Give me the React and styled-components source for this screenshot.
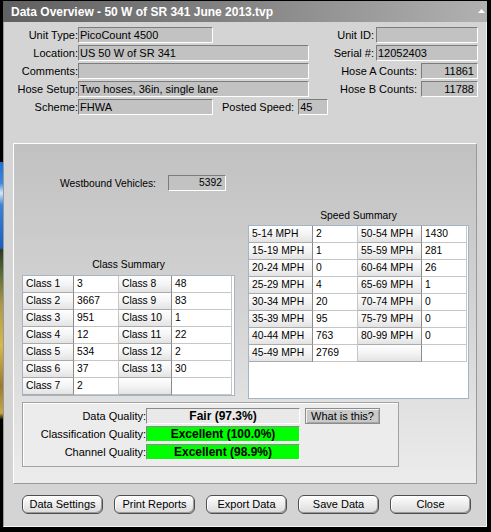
import React from "react"
import styled, { createGlobalStyle } from "styled-components"

const GlobalStyle = createGlobalStyle`
  html, body { margin: 0; padding: 0; background: #000; }
  body { font-family: "Liberation Sans", Arial, sans-serif; color: #000; }
  * { box-sizing: border-box; }
`

const classRows = [
    ["Class 1", "3", "Class 8", "48"],
    ["Class 2", "3667", "Class 9", "83"],
    ["Class 3", "951", "Class 10", "1"],
    ["Class 4", "12", "Class 11", "22"],
    ["Class 5", "534", "Class 12", "2"],
    ["Class 6", "37", "Class 13", "30"],
    ["Class 7", "2", "", ""],
]

const speedRows = [
    ["5-14 MPH", "2", "50-54 MPH", "1430"],
    ["15-19 MPH", "1", "55-59 MPH", "281"],
    ["20-24 MPH", "0", "60-64 MPH", "26"],
    ["25-29 MPH", "4", "65-69 MPH", "1"],
    ["30-34 MPH", "20", "70-74 MPH", "0"],
    ["35-39 MPH", "95", "75-79 MPH", "0"],
    ["40-44 MPH", "763", "80-99 MPH", "0"],
    ["45-49 MPH", "2769", "", ""],
]

const SummaryTable = ({ rows, cols, height }) => (
    <Table cols={cols} style={{ height }}>
        {rows.map((r, i) => (
            <React.Fragment key={i}>
                <LabelCell>{r[0]}</LabelCell>
                <ValueCell>{r[1]}</ValueCell>
                <LabelCell>{r[2]}</LabelCell>
                <ValueCell>{r[3]}</ValueCell>
            </React.Fragment>
        ))}
    </Table>
)

const App = () => {
    return (
        <>
            <GlobalStyle />
            <Screen>
                <Wallpaper />
                <Window>
                    <TitleBar>
                        <span>Data Overview - 50 W of SR 341 June 2013.tvp</span>
                        <svg width="7" height="4" viewBox="0 0 7 4">
                            <polygon points="3.5,0 7,4 0,4" fill="#fff" />
                        </svg>
                    </TitleBar>

                    <Body>
                        <Top>
                            <Row>
                                <Label>Unit Type:</Label>
                                <Field w={135}>PicoCount 4500</Field>
                                <RightGroup>
                                    <Label as="span">Unit ID:</Label>
                                    <Field w={102}></Field>
                                </RightGroup>
                            </Row>
                            <Row>
                                <Label>Location:</Label>
                                <Field w={231}>US 50 W of SR 341</Field>
                                <RightGroup>
                                    <Label as="span">Serial #:</Label>
                                    <Field w={102}>12052403</Field>
                                </RightGroup>
                            </Row>
                            <Row>
                                <Label>Comments:</Label>
                                <Field w={231}></Field>
                                <RightGroup gap={4}>
                                    <Label as="span">Hose A Counts:</Label>
                                    <Field w={57} right>11861</Field>
                                </RightGroup>
                            </Row>
                            <Row>
                                <Label>Hose Setup:</Label>
                                <Field w={231}>Two hoses, 36in, single lane</Field>
                                <RightGroup gap={4}>
                                    <Label as="span">Hose B Counts:</Label>
                                    <Field w={57} right>11788</Field>
                                </RightGroup>
                            </Row>
                            <Row>
                                <Label>Scheme:</Label>
                                <Field w={135}>FHWA</Field>
                                <SpeedLabel>Posted Speed:</SpeedLabel>
                                <Field w={30}>45</Field>
                            </Row>
                        </Top>

                        <Panel>
                            <WestRow>
                                <small>Westbound Vehicles:</small>
                                <Field w={58} right small>5392</Field>
                            </WestRow>

                            <TablesRow>
                                <Column w={213} mb={3}>
                                    <Caption>Class Summary</Caption>
                                    <Gap h={3} />
                                    <SummaryTable rows={classRows} cols="51px 45px 53px 60px" height={121} />
                                </Column>
                                <Column w={221}>
                                    <Caption>Speed Summary</Caption>
                                    <Gap h={2} />
                                    <SummaryTable rows={speedRows} cols="64px 45px 64px 45px" height={174} />
                                </Column>
                            </TablesRow>

                            <Quality>
                                <QualityRows>
                                    <QRow>
                                        <QLabel>Data Quality:</QLabel>
                                        <QField>Fair (97.3%)</QField>
                                    </QRow>
                                    <QRow>
                                        <QLabel>Classification Quality:</QLabel>
                                        <QField good>Excellent (100.0%)</QField>
                                    </QRow>
                                    <QRow>
                                        <QLabel>Channel Quality:</QLabel>
                                        <QField good>Excellent (98.9%)</QField>
                                    </QRow>
                                </QualityRows>
                                <WhatButton>What is this?</WhatButton>
                            </Quality>
                        </Panel>

                        <ButtonBar>
                            <Button>Data Settings</Button>
                            <Button>Print Reports</Button>
                            <Button>Export Data</Button>
                            <Button>Save Data</Button>
                            <Button>Close</Button>
                        </ButtonBar>
                    </Body>
                </Window>
            </Screen>
        </>
    )
}

export default App


const Screen = styled.div`
    width: 491px;
    height: 532px;
    background: #000;
    display: flex;
    padding: 1px 4px 5px 0;
    overflow: hidden;
`

// bit of desktop wallpaper showing at the left edge
const Wallpaper = styled.div`
    width: 3px;
    background: linear-gradient(to bottom,
        #000 0, #000 161px,
        #1f6fd6 161px, #3b86e0 182px, #d6e6f6 192px, #3a82dc 204px, #1a5fc0 247px,
        #2e3a22 249px, #5a6a38 272px, #b09a48 305px, #d8b848 345px,
        #9a7a30 385px, #c8a844 412px, #000 419px, #000 100%);
`

const Window = styled.div`
    width: 484px;
    display: flex;
    flex-direction: column;
`

const TitleBar = styled.div`
    height: 21px;
    flex-shrink: 0;
    display: flex;
    align-items: center;
    justify-content: space-between;
    padding: 0 2px 0 8px;
    background: linear-gradient(to right, #606060, #858585 50%, #b1b1b1);
    color: #fff;
    font-weight: bold;
    font-size: 12px;
    white-space: nowrap;

    svg{
        margin-bottom: 1px;
    }
`

const Body = styled.div`
    flex: 1;
    display: flex;
    flex-direction: column;
    background: #d4d4d4;
    border-left: 1px solid #9a9a9a;
    border-right: 1px solid #f2f2f2;
    border-bottom: 1px solid #f2f2f2;
    padding-top: 5px;
`

const Top = styled.div`
    display: flex;
    flex-direction: column;
    gap: 2px;
    padding-right: 8px;
`

const Row = styled.div`
    display: flex;
    align-items: center;
    height: 16px;
`

const Label = styled.div`
    width: 74px;
    text-align: right;
    font-size: 11px;
    white-space: nowrap;
`

const RightGroup = styled.div`
    margin-left: auto;
    display: flex;
    align-items: center;
    gap: ${p => p.gap || 2}px;

    span{
        width: auto;
    }
`

const SpeedLabel = styled.span`
    margin-left: 9px;
    margin-right: 4px;
    font-size: 11px;
    white-space: nowrap;
`

const Field = styled.div`
    width: ${p => p.w}px;
    height: 16px;
    background: #c2c2c2;
    border-top: 1px solid #7c7c7c;
    border-left: 1px solid #7c7c7c;
    border-right: 1px solid #fff;
    border-bottom: 1px solid #fff;
    font-size: ${p => p.small ? "10.3px" : "11px"};
    line-height: 14px;
    padding: 0 ${p => p.right ? "3px" : "1px"} 0 1px;
    text-align: ${p => p.right ? "right" : "left"};
    white-space: nowrap;
    overflow: hidden;
`

const Panel = styled.div`
    margin: 28px 9px 0;
    height: 341px;
    border-top: 1px solid #fff;
    border-left: 1px solid #fff;
    border-right: 1px solid #999;
    border-bottom: 1px solid #999;
    background: linear-gradient(#c1c1c1, #d4d4d4 50%, #ececec);
    padding: 31px 7px 16px 8px;
    display: flex;
    flex-direction: column;
`

const WestRow = styled.div`
    display: flex;
    align-items: center;
    gap: 9px;
    margin-left: 38px;
    height: 16px;

    small{
        font-size: 10.3px;
        width: 99px;
    }
`

const TablesRow = styled.div`
    margin-top: 18px;
    display: flex;
    align-items: flex-end;
    gap: 13px;
`

const Column = styled.div`
    width: ${p => p.w}px;
    margin-bottom: ${p => p.mb || 0}px;
    display: flex;
    flex-direction: column;
`

const Caption = styled.div`
    height: 14px;
    line-height: 14px;
    text-align: center;
    font-size: 10.3px;
`

const Gap = styled.div`
    height: ${p => p.h}px;
`

const Table = styled.div`
    border: 1px solid #a5b5c6;
    background: #fff;
    display: grid;
    grid-template-columns: ${p => p.cols};
    grid-auto-rows: 17px;
    align-content: start;
`

const LabelCell = styled.div`
    background: linear-gradient(#fefefe, #f4f4f4 50%, #e3e3e3);
    border-right: 1px solid #8b8b8b;
    border-bottom: 1px solid #ababab;
    padding-left: 3px;
    font-size: 10.3px;
    line-height: 16px;
    white-space: nowrap;
`

const ValueCell = styled.div`
    background: #fff;
    border-right: 1px solid #c6c6c6;
    border-bottom: 1px solid #c6c6c6;
    padding-left: 3px;
    font-size: 10.3px;
    line-height: 16px;
    white-space: nowrap;
`

const Quality = styled.div`
    margin-top: 3px;
    width: 377px;
    height: 65px;
    background: #ececec;
    border: 1px solid #a2a2a2;
    box-shadow: inset 1px 1px 0 #fff;
    padding: 5px 0 6px;
    display: flex;
    align-items: flex-start;
`

const QualityRows = styled.div`
    display: flex;
    flex-direction: column;
    gap: 2px;
`

const QRow = styled.div`
    display: flex;
    align-items: center;
    height: 16px;
`

const QLabel = styled.div`
    width: 123px;
    text-align: right;
    font-size: 11px;
    white-space: nowrap;
`

const QField = styled.div`
    width: 154px;
    height: 16px;
    background: ${p => p.good ? "#00ff00" : "#e9e9e9"};
    border-top: 1px solid #8a8a8a;
    border-left: 1px solid #8a8a8a;
    border-right: 1px solid #fff;
    border-bottom: 1px solid #fff;
    text-align: center;
    font-size: 12px;
    font-weight: bold;
    line-height: 14px;
    white-space: nowrap;
`

const WhatButton = styled.div`
    width: 75px;
    height: 16px;
    margin-left: 5px;
    background: #c9c9c9;
    border: 1px solid #8c8c8c;
    box-shadow: inset 1px 1px 0 #f2f2f2, inset -1px -1px 0 #a6a6a6;
    font-size: 11px;
    line-height: 14px;
    text-align: center;
    white-space: nowrap;
`

const ButtonBar = styled.div`
    display: flex;
    gap: 11px;
    margin: 11px 0 0 18px;
`

const Button = styled.div`
    width: 81px;
    height: 19px;
    border: 1px solid #4e4e4e;
    border-radius: 6px;
    background: linear-gradient(#fdfdfd, #eeeeee 45%, #dadada);
    box-shadow: inset 1px 1px 0 #fff, inset -1px -1px 0 #9a9a9a;
    font-size: 11px;
    line-height: 17px;
    text-align: center;
    white-space: nowrap;
`
